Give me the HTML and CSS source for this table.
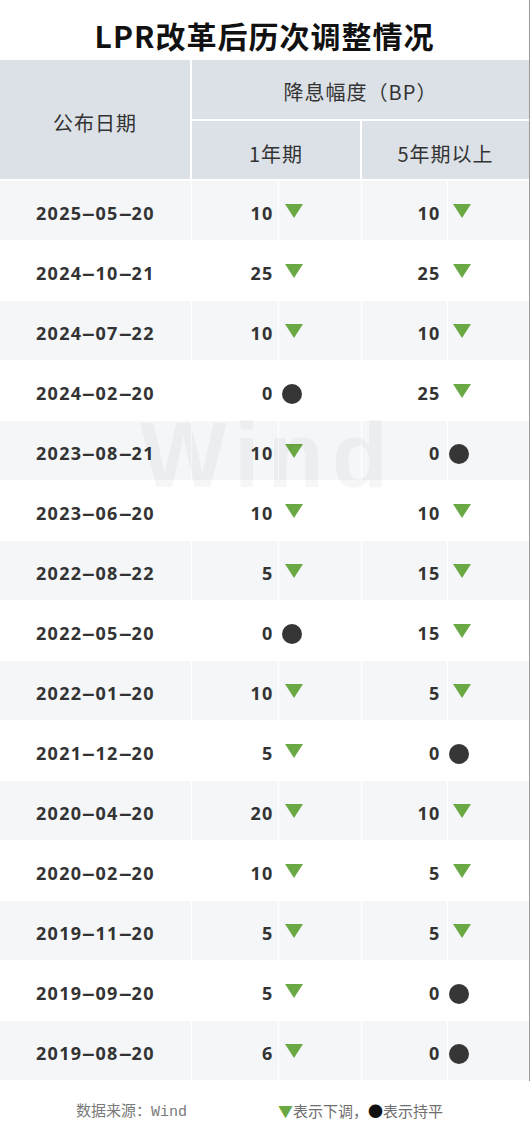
FILE: index.html
```html
<!DOCTYPE html>
<html lang="zh-CN">
<head>
<meta charset="utf-8">
<title>LPR改革后历次调整情况</title>
<link rel="stylesheet" href="styles.css">
</head>
<body>
<div class="sheet">
  <h1 class="title">LPR改革后历次调整情况</h1>
  <div class="table-wrap">
    <table class="lpr">
      <colgroup>
        <col class="c-date"><col class="c-n1"><col class="c-i1"><col class="c-n2"><col class="c-i2">
      </colgroup>
      <thead>
        <tr class="h1"><th rowspan="2" class="h-date">公布日期</th><th colspan="4">降息幅度（BP）</th></tr>
        <tr class="h2"><th colspan="2">1年期</th><th colspan="2">5年期以上</th></tr>
      </thead>
      <tbody>
        <tr><td class="date">2025<span class="sep">-</span>05<span class="sep">-</span>20</td><td class="num n1">10</td><td class="ico i1"><span class="tri"></span></td><td class="num n2">10</td><td class="ico i2"><span class="tri"></span></td></tr>
        <tr><td class="date">2024<span class="sep">-</span>10<span class="sep">-</span>21</td><td class="num n1">25</td><td class="ico i1"><span class="tri"></span></td><td class="num n2">25</td><td class="ico i2"><span class="tri"></span></td></tr>
        <tr><td class="date">2024<span class="sep">-</span>07<span class="sep">-</span>22</td><td class="num n1">10</td><td class="ico i1"><span class="tri"></span></td><td class="num n2">10</td><td class="ico i2"><span class="tri"></span></td></tr>
        <tr><td class="date">2024<span class="sep">-</span>02<span class="sep">-</span>20</td><td class="num n1">0</td><td class="ico i1"><span class="dot"></span></td><td class="num n2">25</td><td class="ico i2"><span class="tri"></span></td></tr>
        <tr><td class="date">2023<span class="sep">-</span>08<span class="sep">-</span>21</td><td class="num n1">10</td><td class="ico i1"><span class="tri"></span></td><td class="num n2">0</td><td class="ico i2"><span class="dot"></span></td></tr>
        <tr><td class="date">2023<span class="sep">-</span>06<span class="sep">-</span>20</td><td class="num n1">10</td><td class="ico i1"><span class="tri"></span></td><td class="num n2">10</td><td class="ico i2"><span class="tri"></span></td></tr>
        <tr><td class="date">2022<span class="sep">-</span>08<span class="sep">-</span>22</td><td class="num n1">5</td><td class="ico i1"><span class="tri"></span></td><td class="num n2">15</td><td class="ico i2"><span class="tri"></span></td></tr>
        <tr><td class="date">2022<span class="sep">-</span>05<span class="sep">-</span>20</td><td class="num n1">0</td><td class="ico i1"><span class="dot"></span></td><td class="num n2">15</td><td class="ico i2"><span class="tri"></span></td></tr>
        <tr><td class="date">2022<span class="sep">-</span>01<span class="sep">-</span>20</td><td class="num n1">10</td><td class="ico i1"><span class="tri"></span></td><td class="num n2">5</td><td class="ico i2"><span class="tri"></span></td></tr>
        <tr><td class="date">2021<span class="sep">-</span>12<span class="sep">-</span>20</td><td class="num n1">5</td><td class="ico i1"><span class="tri"></span></td><td class="num n2">0</td><td class="ico i2"><span class="dot"></span></td></tr>
        <tr><td class="date">2020<span class="sep">-</span>04<span class="sep">-</span>20</td><td class="num n1">20</td><td class="ico i1"><span class="tri"></span></td><td class="num n2">10</td><td class="ico i2"><span class="tri"></span></td></tr>
        <tr><td class="date">2020<span class="sep">-</span>02<span class="sep">-</span>20</td><td class="num n1">10</td><td class="ico i1"><span class="tri"></span></td><td class="num n2">5</td><td class="ico i2"><span class="tri"></span></td></tr>
        <tr><td class="date">2019<span class="sep">-</span>11<span class="sep">-</span>20</td><td class="num n1">5</td><td class="ico i1"><span class="tri"></span></td><td class="num n2">5</td><td class="ico i2"><span class="tri"></span></td></tr>
        <tr><td class="date">2019<span class="sep">-</span>09<span class="sep">-</span>20</td><td class="num n1">5</td><td class="ico i1"><span class="tri"></span></td><td class="num n2">0</td><td class="ico i2"><span class="dot"></span></td></tr>
        <tr><td class="date">2019<span class="sep">-</span>08<span class="sep">-</span>20</td><td class="num n1">6</td><td class="ico i1"><span class="tri"></span></td><td class="num n2">0</td><td class="ico i2"><span class="dot"></span></td></tr>
      </tbody>
    </table>
    <div class="watermark">Wind</div>
  </div>
</div>
<div class="footer">
  <div class="src">数据来源：<span class="mono">Wind</span></div>
  <div class="legend"><span class="g-tri">▼</span>表示下调，<span class="g-dot">●</span>表示持平</div>
</div>
</body>
</html>
```
FILE: styles.css
```css
html, body {
  margin: 0;
  padding: 0;
  background: #ffffff;
}
body {
  width: 531px;
  font-family: "Noto Sans", "Noto Sans CJK SC", sans-serif;
  color: #333333;
}
.sheet {
  width: 529px;
  border-right: 1px solid #9c9c9c;
}
.title {
  margin: 0;
  height: 60px;
  box-sizing: border-box;
  padding-top: 10px;
  display: flex;
  align-items: center;
  justify-content: center;
  font-family: "Noto Sans CJK SC", sans-serif;
  font-size: 30px;
  font-weight: 700;
  color: #111111;
  letter-spacing: 1px;
}
.table-wrap {
  position: relative;
}
.lpr {
  width: 529px;
  table-layout: fixed;
  border-collapse: collapse;
}
.c-date { width: 191px; }
.c-n1 { width: 87px; }
.c-i1 { width: 83px; }
.c-n2 { width: 86px; }
.c-i2 { width: 82px; }
.lpr th {
  background: #dce1e7;
  border: 2px solid #ffffff;
  padding: 0;
  font-family: "Noto Sans CJK SC", sans-serif;
  font-size: 20px;
  font-weight: 400;
  color: #333333;
  letter-spacing: 1px;
  text-align: center;
}
.lpr .h1 th {
  height: 56px;
  padding-top: 3px;
}
.lpr .h2 th {
  height: 51px;
  padding-top: 7px;
}
.lpr .h1 .h-date { padding-top: 6px; }
.lpr thead tr:first-child th { border-top: 0; }
.lpr th:first-child { border-left: 0; }
.lpr th:last-child { border-right: 0; }
.lpr td {
  height: 54px;
  padding: 5px 0 0 0;
  border: 1px solid #ffffff;
  font-size: 18px;
  font-weight: 700;
  color: #333333;
  vertical-align: middle;
}
.lpr tbody tr:nth-child(odd) td { background: #f4f6f8; }
.lpr tbody tr:nth-child(even) td { background: #ffffff; }
.lpr td:first-child { border-left: 0; }
.lpr td:last-child { border-right: 0; }
.lpr .date {
  padding-left: 36px;
  letter-spacing: 1.3px;
}
.sep {
  display: inline-block;
  width: 13px;
  text-align: center;
  letter-spacing: 0;
  transform: scaleX(2.3);
}
.lpr .num {
  text-align: right;
  letter-spacing: 1.2px;
}
.lpr .n1 { padding-right: 4px; }
.lpr .n2 { padding-right: 6px; }
.lpr .ico { padding-top: 0; height: 59px; }
.lpr .i1 { padding-left: 6px; }
.lpr .i2 { padding-left: 5px; }
.tri {
  display: block;
  width: 0;
  height: 0;
  margin-top: 1px;
  border-left: 9px solid transparent;
  border-right: 9px solid transparent;
  border-top: 14px solid #6aa843;
}
.dot {
  display: block;
  width: 20px;
  height: 20px;
  margin-top: 7px;
  margin-left: -3px;
  border-radius: 50%;
  background: #363636;
}
.i2 .dot { margin-left: -4px; }
.watermark {
  position: absolute;
  left: 140px;
  top: 343px;
  font-family: "Liberation Sans", sans-serif;
  font-weight: 700;
  font-size: 92px;
  letter-spacing: 8px;
  color: rgba(0, 0, 0, 0.035);
  pointer-events: none;
}
.footer {
  height: 61px;
  display: flex;
  align-items: center;
  padding-left: 76px;
  padding-bottom: 3px;
  box-sizing: border-box;
  font-family: "Noto Sans CJK SC", sans-serif;
  font-size: 15px;
  color: #7a7a7a;
}
.src {
  width: 202px;
}
.mono {
  font-family: "Liberation Mono", monospace;
  font-size: 15px;
}
.legend {
  font-size: 15px;
  color: #6e6e6e;
}
.g-tri { color: #6aa843; }
.g-dot { color: #111111; }
```
